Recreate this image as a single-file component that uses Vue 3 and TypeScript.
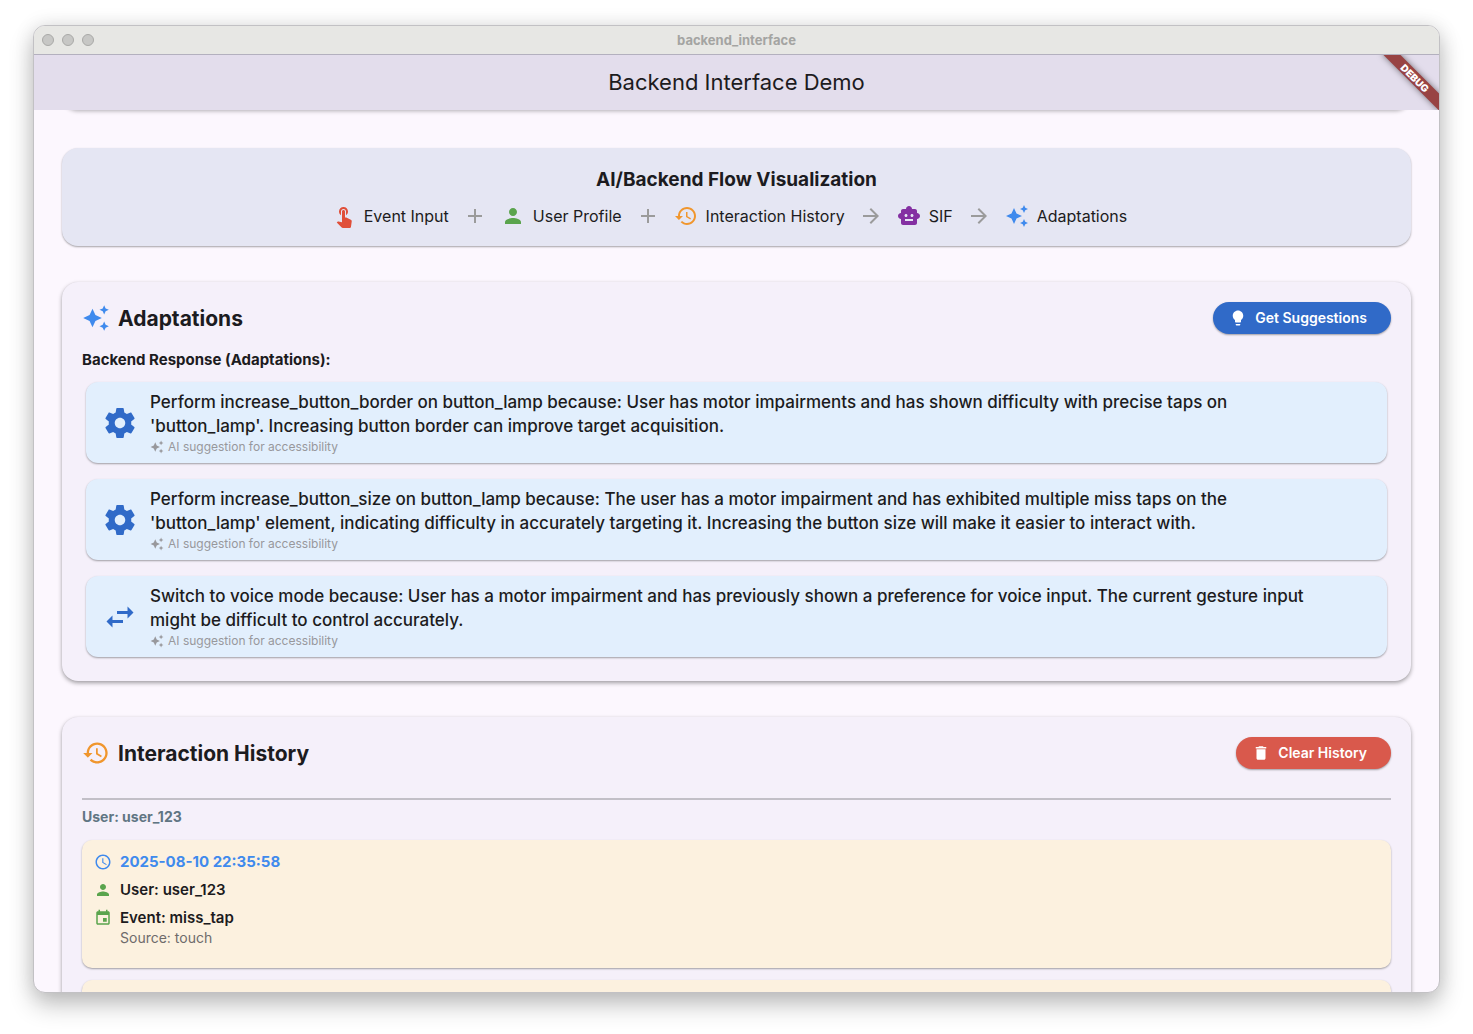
<script setup lang="ts">
type IconName =
  | 'touch' | 'person' | 'history' | 'robot' | 'sparkles' | 'add' | 'arrow'
  | 'bulb' | 'trash' | 'gear' | 'swap' | 'clock' | 'event'

const icons: Record<IconName, string> = {
  touch: 'M9 11.24V7.5C9 6.12 10.12 5 11.5 5S14 6.12 14 7.5v3.74c1.21-.81 2-2.18 2-3.74C16 5.01 13.99 3 11.5 3S7 5.01 7 7.5c0 1.56.79 2.93 2 3.74zm9.84 4.63l-4.54-2.26c-.17-.07-.35-.11-.54-.11H13v-6c0-.83-.67-1.5-1.5-1.5S10 6.67 10 7.5v10.74c-3.6-.76-3.54-.75-3.67-.75-.31 0-.59.13-.79.33l-.79.8 4.94 4.94c.27.27.65.44 1.06.44h6.79c.75 0 1.33-.55 1.44-1.28l.75-5.27c.01-.07.02-.14.02-.2 0-.62-.38-1.16-.91-1.38z',
  person: 'M12 12c2.21 0 4-1.79 4-4s-1.79-4-4-4-4 1.79-4 4 1.79 4 4 4zm0 2c-2.67 0-8 1.34-8 4v2h16v-2c0-2.66-5.33-4-8-4z',
  history: 'M13 3c-4.97 0-9 4.03-9 9H1l3.89 3.89.07.14L9 12H6c0-3.87 3.13-7 7-7s7 3.13 7 7-3.13 7-7 7c-1.93 0-3.68-.79-4.94-2.06l-1.42 1.42C8.27 19.99 10.51 21 13 21c4.97 0 9-4.03 9-9s-4.03-9-9-9zm-1 5v5l4.28 2.54.72-1.21-3.5-2.08V8H12z',
  robot: 'M20 9V7c0-1.1-.9-2-2-2h-3c0-1.66-1.34-3-3-3S9 3.34 9 5H6c-1.1 0-2 .9-2 2v2c-1.66 0-3 1.34-3 3s1.34 3 3 3v4c0 1.1.9 2 2 2h12c1.1 0 2-.9 2-2v-4c1.66 0 3-1.34 3-3s-1.34-3-3-3zM7.5 11.5c0-.83.67-1.5 1.5-1.5s1.5.67 1.5 1.5S9.83 13 9 13s-1.5-.67-1.5-1.5zM16 17H8v-2h8v2zm-1-4c-.83 0-1.5-.67-1.5-1.5S14.17 10 15 10s1.5.67 1.5 1.5S15.83 13 15 13z',
  sparkles: 'M19 9l1.25-2.75L23 5l-2.75-1.25L19 1l-1.25 2.75L15 5l2.75 1.25L19 9zm-7.5.5L9 4 6.5 9.5 1 12l5.5 2.5L9 20l2.5-5.5L17 12l-5.5-2.5zM19 15l-1.25 2.75L15 19l2.75 1.25L19 23l1.25-2.75L23 19l-2.75-1.25L19 15z',
  add: 'M19 13h-6v6h-2v-6H5v-2h6V5h2v6h6v2z',
  arrow: 'M12 4l-1.41 1.41L16.17 11H4v2h12.17l-5.58 5.59L12 20l8-8z',
  bulb: 'M9 21c0 .55.45 1 1 1h4c.55 0 1-.45 1-1v-1H9v1zm3-19C8.14 2 5 5.14 5 9c0 2.38 1.19 4.47 3 5.74V17c0 .55.45 1 1 1h6c.55 0 1-.45 1-1v-2.26c1.81-1.27 3-3.36 3-5.74 0-3.86-3.14-7-7-7z',
  trash: 'M6 19c0 1.1.9 2 2 2h8c1.1 0 2-.9 2-2V7H6v12zM19 4h-3.5l-1-1h-5l-1 1H5v2h14V4z',
  gear: 'M19.43 12.98c.04-.32.07-.64.07-.98s-.03-.66-.07-.98l2.11-1.65c.19-.15.24-.42.12-.64l-2-3.46c-.12-.22-.39-.3-.61-.22l-2.49 1c-.52-.4-1.08-.73-1.69-.98l-.38-2.65C14.46 2.18 14.25 2 14 2h-4c-.25 0-.46.18-.49.42l-.38 2.65c-.61.25-1.17.59-1.69.98l-2.49-1c-.23-.09-.49 0-.61.22l-2 3.46c-.13.22-.07.49.12.64l2.11 1.65c-.04.32-.07.65-.07.98s.03.66.07.98l-2.11 1.65c-.19.15-.24.42-.12.64l2 3.46c.12.22.39.3.61.22l2.49-1c.52.4 1.08.73 1.69.98l.38 2.65c.03.24.24.42.49.42h4c.25 0 .46-.18.49-.42l.38-2.65c.61-.25 1.17-.59 1.69-.98l2.49 1c.23.09.49 0 .61-.22l2-3.46c.12-.22.07-.49-.12-.64l-2.11-1.65zM12 15.5c-1.93 0-3.5-1.57-3.5-3.5s1.57-3.5 3.5-3.5 3.5 1.57 3.5 3.5-1.57 3.5-3.5 3.5z',
  swap: 'M6.99 11L3 15l3.99 4v-3H14v-2H6.99v-3zM21 9l-3.99-4v3H10v2h7.01v3L21 9z',
  clock: 'M11.99 2C6.47 2 2 6.48 2 12s4.47 10 9.99 10C17.52 22 22 17.52 22 12S17.52 2 11.99 2zM12 20c-4.42 0-8-3.58-8-8s3.58-8 8-8 8 3.58 8 8-3.58 8-8 8zm.5-13H11v6l5.25 3.15.75-1.23-4.5-2.67z',
  event: 'M17 12h-5v5h5v-5zM16 1v2H8V1H6v2H5c-1.11 0-1.99.9-1.99 2L3 19c0 1.1.89 2 2 2h14c1.1 0 2-.9 2-2V5c0-1.1-.9-2-2-2h-1V1h-2zm3 18H5V8h14v11z',
}

interface FlowStep { icon: IconName; tone: string; label: string; next?: IconName }
const flow: FlowStep[] = [
  { icon: 'touch', tone: 'red', label: 'Event Input', next: 'add' },
  { icon: 'person', tone: 'green', label: 'User Profile', next: 'add' },
  { icon: 'history', tone: 'orange', label: 'Interaction History', next: 'arrow' },
  { icon: 'robot', tone: 'purple', label: 'SIF', next: 'arrow' },
  { icon: 'sparkles', tone: 'blue', label: 'Adaptations' },
]

interface Adaptation { icon: IconName; text: string }
const adaptations: Adaptation[] = [
  {
    icon: 'gear',
    text: "Perform increase_button_border on button_lamp because: User has motor impairments and has shown difficulty with precise taps on 'button_lamp'. Increasing button border can improve target acquisition.",
  },
  {
    icon: 'gear',
    text: "Perform increase_button_size on button_lamp because: The user has a motor impairment and has exhibited multiple miss taps on the 'button_lamp' element, indicating difficulty in accurately targeting it. Increasing the button size will make it easier to interact with.",
  },
  {
    icon: 'swap',
    text: 'Switch to voice mode because: User has a motor impairment and has previously shown a preference for voice input. The current gesture input might be difficult to control accurately.',
  },
]
</script>

<template>
  <div class="desktop">
    <div class="window">
      <header class="titlebar">
        <div class="lights"><i></i><i></i><i></i></div>
        <span class="window-title">backend_interface</span>
      </header>

      <div class="app">
        <div class="appbar">
          <h1>Backend Interface Demo</h1>
          <div class="debug">DEBUG</div>
        </div>

        <main class="content">
          <div class="card previous"></div>

          <section class="card flow-card">
            <h2>AI/Backend Flow Visualization</h2>
            <div class="flow">
              <template v-for="step in flow" :key="step.label">
                <span class="step">
                  <svg class="icon i24" :class="step.tone" viewBox="0 0 24 24"><path :d="icons[step.icon]" /></svg>
                  {{ step.label }}
                </span>
                <svg v-if="step.next" class="icon i24 muted" viewBox="0 0 24 24"><path :d="icons[step.next]" /></svg>
              </template>
            </div>
          </section>

          <section class="card raised">
            <div class="card-head">
              <svg class="icon i28 blue" viewBox="0 0 24 24"><path :d="icons.sparkles" /></svg>
              <h2>Adaptations</h2>
              <button type="button" class="btn primary">
                <svg class="icon i18" viewBox="0 0 24 24"><path :d="icons.bulb" /></svg>
                Get Suggestions
              </button>
            </div>
            <h3>Backend Response (Adaptations):</h3>
            <ul class="adaptations">
              <li v-for="item in adaptations" :key="item.text">
                <svg class="icon i36 navy" viewBox="0 0 24 24"><path :d="icons[item.icon]" /></svg>
                <div class="body">
                  <p>{{ item.text }}</p>
                  <div class="hint">
                    <svg class="icon i14" viewBox="0 0 24 24"><path :d="icons.sparkles" /></svg>
                    AI suggestion for accessibility
                  </div>
                </div>
              </li>
            </ul>
          </section>

          <section class="card raised">
            <div class="card-head">
              <svg class="icon i28 orange" viewBox="0 0 24 24"><path :d="icons.history" /></svg>
              <h2>Interaction History</h2>
              <button type="button" class="btn danger">
                <svg class="icon i18" viewBox="0 0 24 24"><path :d="icons.trash" /></svg>
                Clear History
              </button>
            </div>
            <hr />
            <h4>User: user_123</h4>
            <article class="entry">
              <div class="row time">
                <svg class="icon i18" viewBox="0 0 24 24"><path :d="icons.clock" /></svg>
                2025-08-10 22:35:58
              </div>
              <div class="row">
                <svg class="icon i18 green" viewBox="0 0 24 24"><path :d="icons.person" /></svg>
                User: user_123
              </div>
              <div class="row">
                <svg class="icon i18 green" viewBox="0 0 24 24"><path :d="icons.event" /></svg>
                Event: miss_tap
              </div>
              <div class="source">Source: touch</div>
            </article>
            <article class="entry"></article>
          </section>
        </main>
      </div>
    </div>
  </div>
</template>

<style>
body {
  margin: 0;
  background: #fff;
}
</style>

<style scoped>
* {
  box-sizing: border-box;
}
h1, h2, h3, h4, p, ul {
  margin: 0;
  padding: 0;
}
.desktop {
  height: 100vh;
  padding: 25px 33px 41px;
  overflow: hidden;
  font-family: Inter, Roboto, sans-serif;
  color: #1c1b20;
}
.window {
  height: 100%;
  display: flex;
  flex-direction: column;
  border: 1px solid #c2c1c4;
  border-radius: 12px;
  overflow: hidden;
  background: #fcf7fe;
  box-shadow: 0 12px 24px rgba(0, 0, 0, 0.24), 0 0 20px rgba(0, 0, 0, 0.1);
}
.titlebar {
  flex: none;
  display: grid;
  grid-template-columns: 1fr auto 1fr;
  align-items: center;
  height: 29px;
  padding: 0 8px;
  background: #e7e7e4;
  border-bottom: 1px solid #b3b0be;
}
.lights {
  display: flex;
  gap: 8px;
}
.lights i {
  width: 12px;
  height: 12px;
  border: 1px solid #a9a9a7;
  border-radius: 50%;
  background: #c7c7c5;
}
.window-title {
  font-size: 13px;
  line-height: 16px;
  font-weight: 700;
  color: #a4a4a2;
}
.app {
  flex: 1;
  min-height: 0;
  display: flex;
  flex-direction: column;
}
.appbar {
  flex: none;
  position: relative;
  display: flex;
  align-items: center;
  justify-content: center;
  height: 55px;
  padding-bottom: 2px;
  overflow: hidden;
  background: #e3ddec;
}
h1 {
  font-size: 22px;
  line-height: 28px;
  font-weight: 400;
}
.debug {
  position: absolute;
  top: 17px;
  right: -16px;
  width: 80px;
  height: 12px;
  transform: rotate(45deg);
  background: #984343;
  box-shadow: 0 0 6px rgba(0, 0, 0, 0.5);
  color: #fff;
  font-size: 10px;
  line-height: 12px;
  font-weight: 900;
  text-align: center;
}
.content {
  flex: 1;
  min-height: 0;
  overflow: hidden;
  padding: 0 28px;
}
.card {
  border-radius: 16px;
  background: #f5f0fa;
}
.previous {
  height: 32px;
  margin: -32px 0 38px;
  box-shadow: 0 1px 4px rgba(0, 0, 0, 0.3);
}
.flow-card {
  padding: 20px 20px 18px;
  background: #e5e6f3;
  box-shadow: 0 1px 2px rgba(0, 0, 0, 0.35);
  text-align: center;
}
.flow-card h2 {
  font-size: 19px;
  line-height: 24px;
  font-weight: 700;
}
.flow {
  display: flex;
  align-items: center;
  justify-content: center;
  flex-wrap: wrap;
  gap: 14px;
  padding-right: 14px;
  margin-top: 12px;
}
.step {
  display: flex;
  align-items: center;
  gap: 8px;
  font-size: 16px;
  line-height: 24px;
}
.raised {
  margin-top: 36px;
  padding: 20px 20px 24px;
  box-shadow: 0 2px 4px rgba(0, 0, 0, 0.36), 0 0 1px rgba(0, 0, 0, 0.1);
}
.card-head {
  display: flex;
  align-items: center;
  gap: 8px;
  height: 32px;
}
.card-head h2 {
  flex: 1;
  padding-top: 2px;
  font-size: 21px;
  line-height: 28px;
  font-weight: 700;
}
.btn {
  display: flex;
  align-items: center;
  gap: 8px;
  height: 32px;
  padding: 0 24px 0 16px;
  border: 0;
  border-radius: 16px;
  font-family: inherit;
  font-size: 14px;
  line-height: 20px;
  font-weight: 600;
  color: #fff;
  box-shadow: 0 1px 2px rgba(0, 0, 0, 0.35);
}
.primary {
  background: #306ac8;
}
.danger {
  background: #d9594c;
}
h3 {
  margin-top: 16px;
  font-size: 15px;
  line-height: 20px;
  font-weight: 700;
}
.adaptations {
  display: flex;
  flex-direction: column;
  gap: 16px;
  margin: 12px 4px 0;
  list-style: none;
}
.adaptations li {
  display: flex;
  align-items: center;
  gap: 12px;
  padding: 8px 16px;
  border-radius: 12px;
  background: #e2effd;
  box-shadow: 0 1px 2px rgba(0, 0, 0, 0.35);
}
.body {
  flex: 1;
  padding-right: 48px;
}
.body p {
  font-size: 17px;
  line-height: 24px;
  font-weight: 500;
}
.hint {
  display: flex;
  align-items: center;
  gap: 4px;
  margin-top: 1px;
  font-size: 12px;
  line-height: 16px;
  color: #98989c;
}
hr {
  height: 2px;
  margin: 29px 0 0;
  border: 0;
  background: #c2bfc7;
}
h4 {
  margin-top: 8px;
  font-size: 14px;
  line-height: 18px;
  font-weight: 700;
  color: #607583;
}
.entry {
  min-height: 128px;
  margin-top: 12px;
  padding: 12px;
  border-radius: 10px;
  background: #fcf1df;
  box-shadow: 0 1px 2px rgba(0, 0, 0, 0.35);
}
h4 + .entry {
  margin-top: 14px;
}
.row {
  display: flex;
  align-items: center;
  gap: 8px;
  margin-bottom: 8px;
  font-size: 15px;
  line-height: 20px;
  font-weight: 600;
}
.time {
  font-weight: 700;
  color: #3f8aed;
}
.source {
  margin-top: -8px;
  padding-left: 26px;
  font-size: 14px;
  line-height: 20px;
  color: #6e6b6b;
}
.icon {
  flex: none;
  display: block;
  fill: currentColor;
}
.i14 { width: 14px; height: 14px; }
.i18 { width: 18px; height: 18px; }
.i24 { width: 24px; height: 24px; }
.i28 { width: 28px; height: 28px; }
.i36 { width: 36px; height: 36px; }
.red { color: #e04f39; }
.green { color: #5aa44d; }
.orange { color: #f0962d; }
.purple { color: #8430a2; }
.blue { color: #3f8aed; }
.navy { color: #306ac8; }
.muted { color: #9b9b9b; }
</style>
